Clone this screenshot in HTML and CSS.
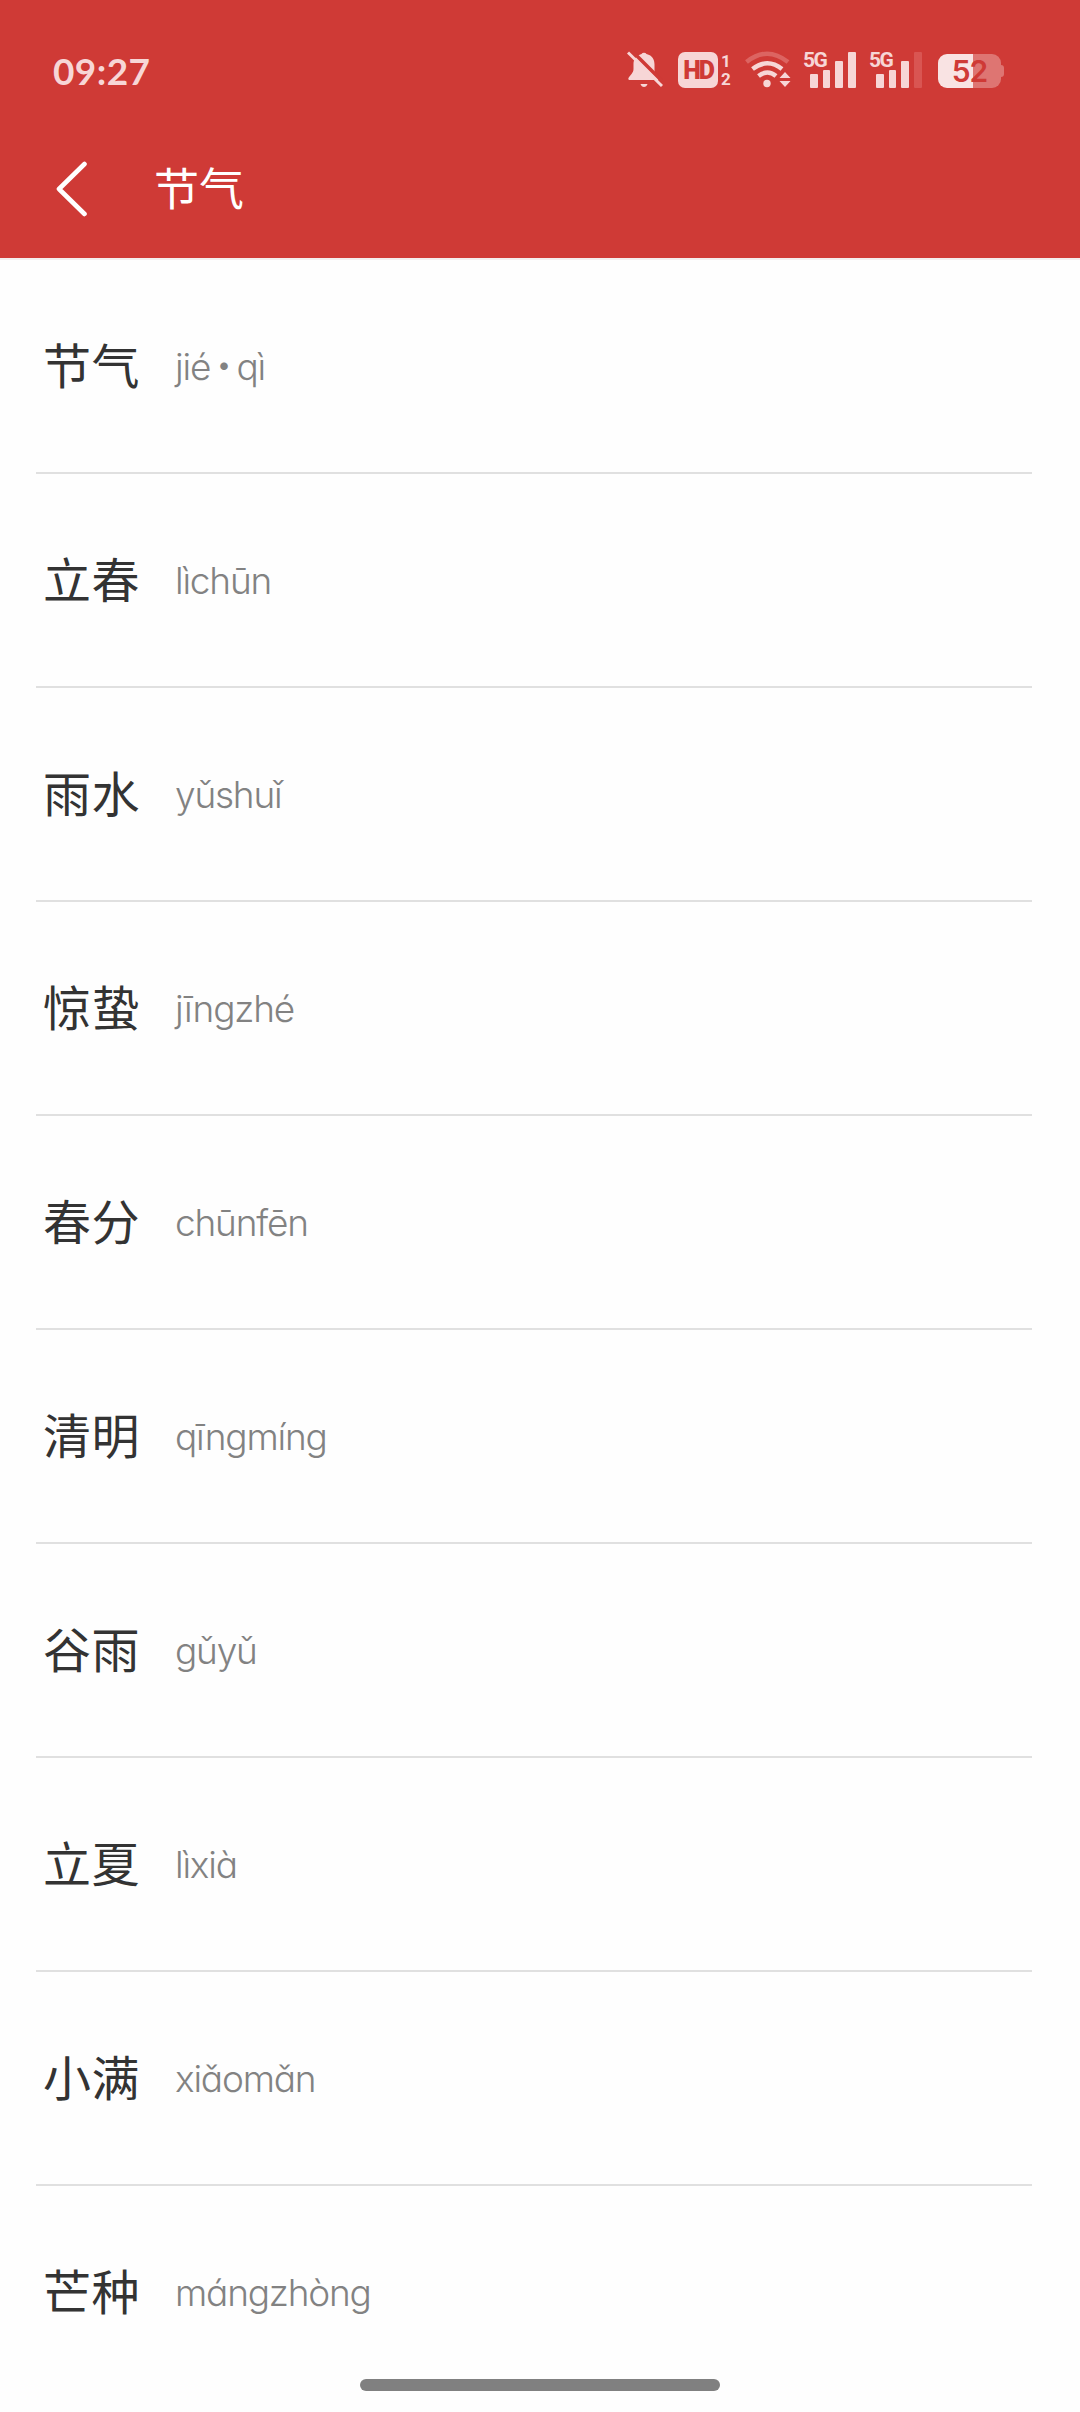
FILE: index.html
```html
<!DOCTYPE html>
<html lang="zh-CN">
<head>
    <meta charset="UTF-8">
    <meta name="viewport" content="width=device-width, initial-scale=1.0">
    <title>节气</title>
    <link rel="stylesheet" href="styles.css">
</head>
<body>

    <div class="header">
        <div class="status-bar">
            <span class="time">09:27</span>
            <div class="status-icons">
                <!-- muted bell -->
                <svg class="bell" width="36" height="38" viewBox="0 0 36 38">
                    <path d="M14.500 3a3 3 0 0 1 5 0c6 1.500 8 5.500 8 10.500v6c0 4 4 5.500 4 9.500H3c-1.500 0-2-1-1.500-2C3 24 6.500 22 6.500 18v-5c0-5 3-8.500 8-10z" fill="#f7d6d6"/>
                    <path d="M13.500 33h7c-.5 2-2 3-3.500 3s-3-1-3.500-3z" fill="#f7d6d6"/>
                    <path d="M4 -1L38 33" stroke="#cf3a36" stroke-width="3.500"/>
                    <path d="M1 1.500L35 35" stroke="#f7d6d6" stroke-width="3"/>
                </svg>
                <div class="hd">HD</div>
                <div class="sims"><span>1</span><span>2</span></div>
                <!-- wifi -->
                <svg class="wifi" width="46" height="38" viewBox="0 0 46 38">
                    <g fill="none" stroke-width="4.500">
                        <path d="M1.500 11Q22 -5.500 43 11" stroke="#dc6461"/>
                        <path d="M7.500 18Q22.500 6.500 37 18" stroke="#f7d6d6"/>
                        <path d="M13.500 25Q22.500 18 31 25" stroke="#f7d6d6"/>
                    </g>
                    <circle cx="22" cy="32.500" r="3.700" fill="#f7d6d6"/>
                    <path d="M40 19.500l6 7.500H34z" stroke="#cf3a36" stroke-width="2" fill="#cf3a36"/>
                    <path d="M40 21l5.500 6h-11zM40 36l5.500-6h-11z" fill="#f7d6d6"/>
                </svg>
                <div class="signal">
                    <span class="net">5G</span>
                    <i class="bar b1"></i><i class="bar b2"></i><i class="bar b3"></i><i class="bar b4"></i>
                </div>
                <div class="signal">
                    <span class="net">5G</span>
                    <i class="bar b1"></i><i class="bar b2"></i><i class="bar b3"></i><i class="bar b4 off"></i>
                </div>
                <div class="battery"><span class="level">52</span></div>
                <div class="nub"></div>
            </div>
        </div>
        <div class="title-bar">
            <svg class="back" width="32" height="56" viewBox="0 0 32 56">
                <path d="M28.500 3L3 28L28.500 53" fill="none" stroke="#fff" stroke-width="4.600" stroke-linecap="round" stroke-linejoin="round"/>
            </svg>
            <h1>节气</h1>
        </div>
    </div>

    <div class="list">
        <div class="item"><span class="word">节气</span><span class="pinyin">jié<b class="dot">•</b>qì</span></div>
        <div class="item"><span class="word">立春</span><span class="pinyin">lìchūn</span></div>
        <div class="item"><span class="word">雨水</span><span class="pinyin">yǔshuǐ</span></div>
        <div class="item"><span class="word">惊蛰</span><span class="pinyin">jīngzhé</span></div>
        <div class="item"><span class="word">春分</span><span class="pinyin">chūnfēn</span></div>
        <div class="item"><span class="word">清明</span><span class="pinyin">qīngmíng</span></div>
        <div class="item"><span class="word">谷雨</span><span class="pinyin">gǔyǔ</span></div>
        <div class="item"><span class="word">立夏</span><span class="pinyin">lìxià</span></div>
        <div class="item"><span class="word">小满</span><span class="pinyin">xiǎomǎn</span></div>
        <div class="item"><span class="word">芒种</span><span class="pinyin">mángzhòng</span></div>
    </div>

    <div class="home-bar"></div>

</body>
</html>
```

FILE: styles.css
```css
* {
    margin: 0;
    padding: 0;
    box-sizing: border-box;
}

body {
    height: 2412px;
    overflow: hidden;
    background-color: #fefefe;
    font-family: Inter, 'Noto Sans CJK SC', sans-serif;
}

.header {
    height: 260px;
    background-color: #cf3a36;
    border-bottom: 2px solid #f4eeee;
}

.status-bar {
    display: flex;
    justify-content: space-between;
    height: 120px;
    padding: 51px 76px 0 53px;
    color: #f7d6d6;
}

.time {
    margin-top: -1px;
    font-family: Lato, sans-serif;
    font-size: 37px;
    font-weight: bold;
    line-height: 42px;
    letter-spacing: 0.4px;
}

.status-icons {
    display: flex;
    align-items: flex-start;
    height: 38px;
}

.bell {
    margin-right: 15px;
}

.hd {
    width: 40px;
    height: 36px;
    margin-top: 1px;
    border-radius: 7px;
    background-color: #f7d6d6;
    color: #cf3a36;
    font-family: Roboto, sans-serif;
    font-size: 25px;
    font-weight: 900;
    line-height: 37px;
    letter-spacing: -2px;
    text-align: center;
}

.sims {
    display: flex;
    flex-direction: column;
    width: 10px;
    margin: 1px 14px 0 3px;
    font-family: Roboto, sans-serif;
    font-size: 17px;
    font-weight: bold;
    line-height: 18px;
}

.wifi {
    margin-right: 13px;
}

.signal {
    position: relative;
    display: flex;
    align-items: flex-end;
    gap: 5px;
    width: 52px;
    height: 37px;
    margin-right: 14px;
    padding-left: 6px;
}

.net {
    position: absolute;
    top: -1px;
    left: -1px;
    font-family: Roboto, sans-serif;
    font-size: 21px;
    font-weight: bold;
    line-height: 20px;
    letter-spacing: -1.5px;
}

.bar {
    width: 7.700px;
    border-radius: 1px;
    background-color: #f7d6d6;
}

.b1 {
    height: 14px;
}

.b2 {
    height: 18px;
}

.b3 {
    height: 27px;
}

.b4 {
    height: 36px;
}

.off {
    background-color: #d95552;
}

.battery {
    width: 63px;
    height: 34px;
    margin: 3px 0 0 2px;
    border-radius: 9px;
    background: linear-gradient(to right, #f9e3e3 35px, #de7572 35px);
    text-align: center;
}

.level {
    color: #cf3a36;
    font-family: Inter, sans-serif;
    font-size: 30px;
    font-weight: 600;
    line-height: 35px;
    letter-spacing: -1px;
}

.nub {
    width: 3px;
    height: 12px;
    margin-top: 14px;
    border-radius: 0 3px 3px 0;
    background-color: #de7572;
}

.title-bar {
    display: flex;
    align-items: center;
    height: 138px;
    padding-left: 56px;
}

.title-bar h1 {
    margin-left: 66px;
    padding-bottom: 5px;
    color: #fff;
    font-family: 'Noto Sans CJK SC', sans-serif;
    font-size: 45px;
    font-weight: normal;
}

.list {
    padding: 0 48px 0 36px;
}

.item {
    display: flex;
    align-items: flex-start;
    height: 214px;
    padding: 68px 0 0 7px;
    border-bottom: 2px solid #e0e0e0;
}

.item:last-child {
    border-bottom: none;
}

.word {
    width: 132px;
    color: #333;
    font-family: 'Noto Sans CJK SC', sans-serif;
    font-size: 48px;
    line-height: 70px;
    letter-spacing: 0.5px;
}

.pinyin {
    margin-top: 4px;
    color: #828282;
    font-size: 37px;
    font-weight: 300;
    line-height: 70px;
    letter-spacing: -1.2px;
    font-feature-settings: "cv11";
}

.dot {
    font-size: 24px;
    font-weight: normal;
    margin: 0 7px;
    position: relative;
    top: -7px;
}

.home-bar {
    position: fixed;
    left: 360px;
    bottom: 21px;
    width: 360px;
    height: 12px;
    border-radius: 6px;
    background-color: #808080;
}
```
